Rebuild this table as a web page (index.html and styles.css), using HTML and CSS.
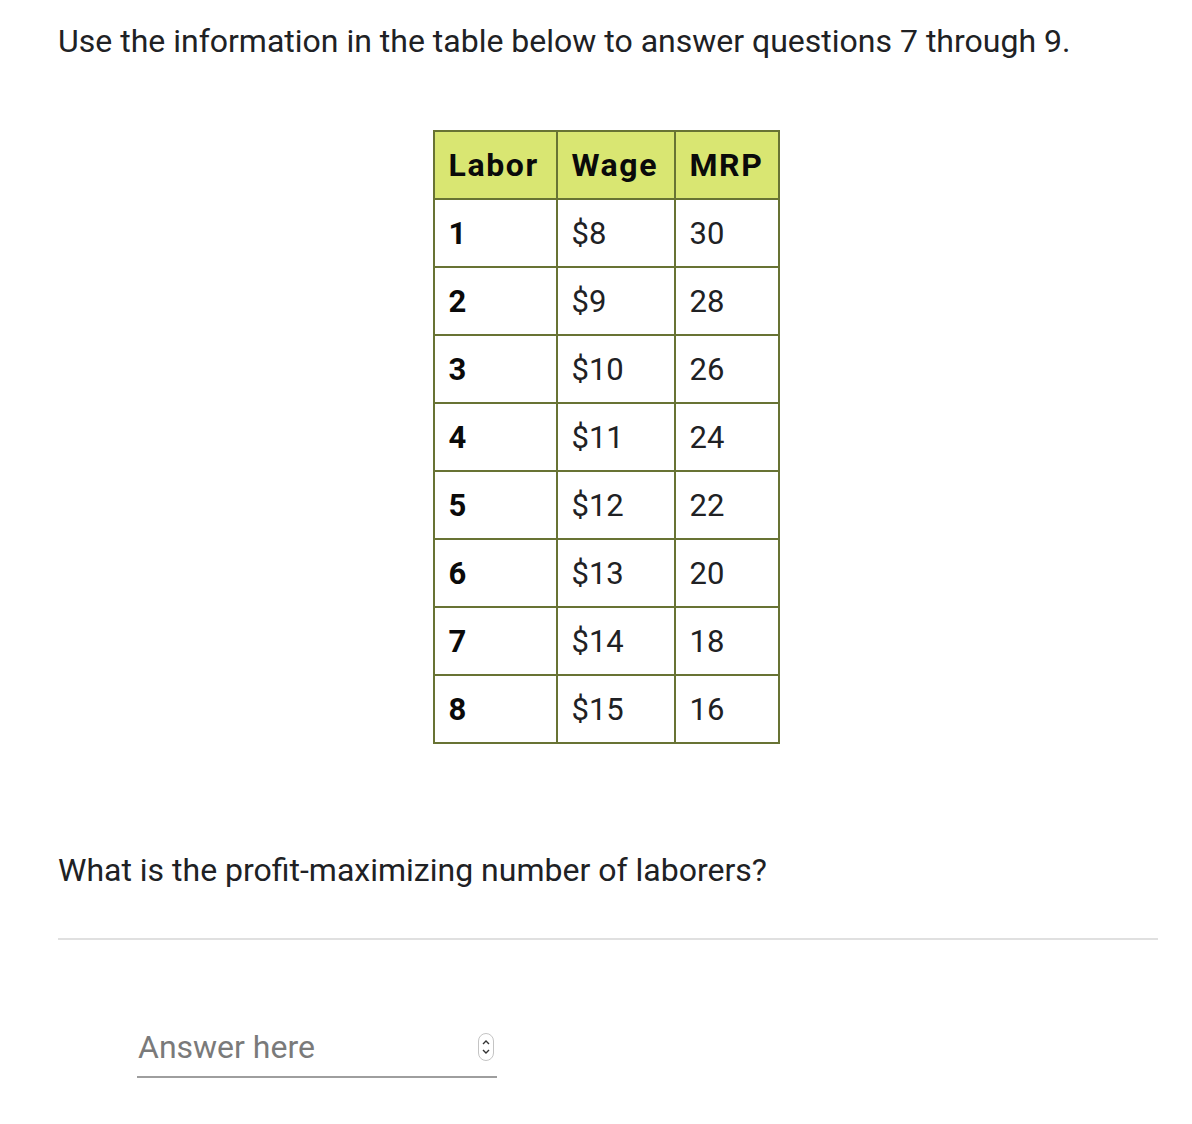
FILE: index.html
```html
<!DOCTYPE html>
<html>
<head>
<meta charset="utf-8">
<link rel="stylesheet" href="styles.css">
</head>
<body>
<div class="page">
  <p class="intro">Use the information in the table below to answer questions 7 through 9.</p>
  <div class="table-wrap">
    <table class="data">
      <thead>
        <tr><th>Labor</th><th>Wage</th><th>MRP</th></tr>
      </thead>
      <tbody>
        <tr><td class="lab">1</td><td>$8</td><td>30</td></tr>
        <tr><td class="lab">2</td><td>$9</td><td>28</td></tr>
        <tr><td class="lab">3</td><td>$10</td><td>26</td></tr>
        <tr><td class="lab">4</td><td>$11</td><td>24</td></tr>
        <tr><td class="lab">5</td><td>$12</td><td>22</td></tr>
        <tr><td class="lab">6</td><td>$13</td><td>20</td></tr>
        <tr><td class="lab">7</td><td>$14</td><td>18</td></tr>
        <tr><td class="lab">8</td><td>$15</td><td>16</td></tr>
      </tbody>
    </table>
  </div>
  <p class="question">What is the profit-maximizing number of laborers?</p>
  <hr class="sep">
  <div class="answer">
    <span class="placeholder">Answer here</span>
    <span class="spinner">
      <svg width="16" height="28" viewBox="0 0 16 28">
        <rect x="0.5" y="0.5" width="15" height="27" rx="7.5" fill="#fff" stroke="#c4c4c4"/>
        <path d="M5 11 L8 8 L11 11" fill="none" stroke="#333" stroke-width="1.4"/>
        <path d="M5 17 L8 20 L11 17" fill="none" stroke="#333" stroke-width="1.4"/>
      </svg>
    </span>
  </div>
</div>
</body>
</html>
```

FILE: styles.css
```css
html, body {
  margin: 0;
  padding: 0;
  background: #ffffff;
}

body {
  font-family: Roboto, "Liberation Sans", sans-serif;
  color: #202124;
}

.page {
  width: 1100px;
  padding: 18px 0 0 58px;
}

.intro {
  margin: 0;
  font-size: 32px;
  line-height: 46px;
}

.table-wrap {
  display: flex;
  justify-content: center;
  margin-top: 66px;
  padding-right: 4px;
}

.data {
  border-collapse: collapse;
  font-size: 31px;
}

.data th,
.data td {
  border: 2px solid #687334;
  text-align: left;
  padding: 0 14px;
  height: 68px;
  box-sizing: border-box;
}

.data th {
  background: #d9e672;
  font-weight: 700;
  font-size: 32px;
  color: #0a0a0a;
  letter-spacing: 1.6px;
}

.data th:nth-child(1) { width: 123px; }
.data th:nth-child(2) { width: 118px; }
.data th:nth-child(3) { width: 104px; }

.data td {
  color: #202124;
}

.data td.lab {
  font-weight: 700;
  color: #0a0a0a;
}

.question {
  margin: 106px 0 0 0;
  font-size: 32px;
  line-height: 40px;
}

.sep {
  margin: 48px 0 0 0;
  border: none;
  border-top: 2px solid #e0e0e0;
  height: 0;
}

.answer {
  display: flex;
  align-items: center;
  justify-content: space-between;
  width: 360px;
  margin: 88px 0 0 79px;
  height: 50px;
  border-bottom: 2px solid #9e9e9e;
  box-sizing: border-box;
  padding: 0 3px 10px 1px;
}

.placeholder {
  font-size: 32px;
  color: #7a7a7a;
}

.spinner {
  display: flex;
}
```
